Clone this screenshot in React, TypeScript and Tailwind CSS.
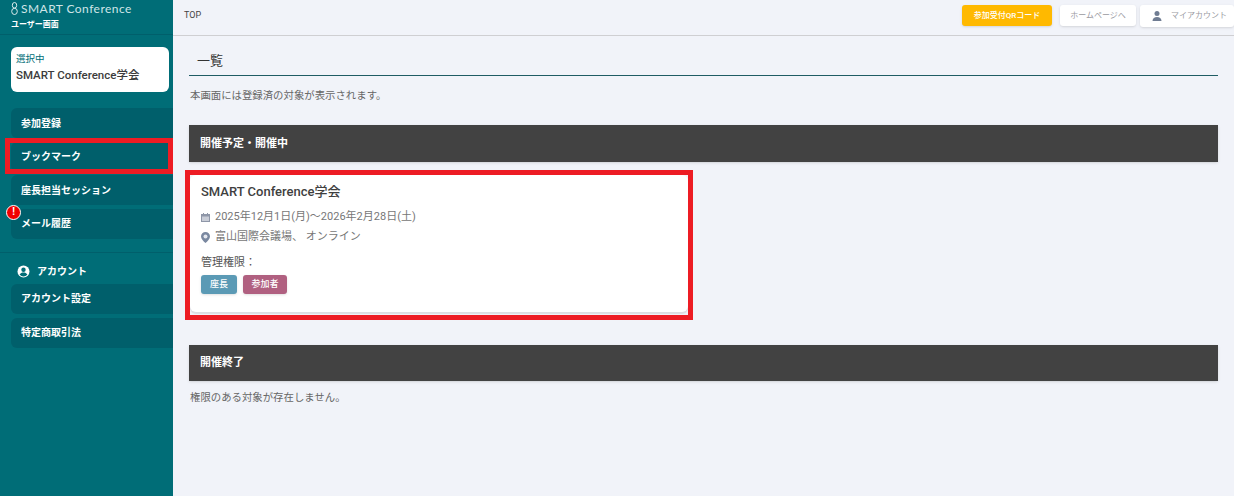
const font = { fontFamily: 'Roboto, "Noto Sans CJK JP", sans-serif' };

const NavItem = ({ label, highlight, alert }: { label: string; highlight?: boolean; alert?: boolean }) => (
  <div className="relative h-[30px] flex items-center pl-[10px] bg-[#005f6b] rounded-l-md text-[10px] font-bold text-white">
    {label}
    {highlight && <div className="absolute left-[-6px] right-0 top-[-4px] bottom-[-2px] border-[5px] border-[#ed1c24]" />}
    {alert && (
      <div className="absolute left-[-5px] top-[-4px] w-[15px] h-[15px] rounded-full bg-[#f00000] border border-white flex items-center justify-center text-[10px] font-bold text-white leading-none">
        !
      </div>
    )}
  </div>
);

const SectionBar = ({ label, tall }: { label: string; tall?: boolean }) => (
  <div className={`${tall ? 'h-[37px]' : 'h-[36px]'} bg-[#424242] flex items-center pl-[11px] pt-[1px] text-[11px] font-bold text-white shadow-sm`}>{label}</div>
);

const AccountIcon = () => (
  <svg width="13" height="13" viewBox="0 0 13 13">
    <circle cx="6.5" cy="6.5" r="6" fill="#fff" />
    <circle cx="6.5" cy="4.8" r="2.2" fill="#006d77" />
    <path d="M2.6 9.6c.8-1.5 2.3-2.1 3.9-2.1s3.1.6 3.9 2.1c-1 1.2-2.4 1.9-3.9 1.9s-2.9-.7-3.9-1.9z" fill="#006d77" />
  </svg>
);

const CalendarIcon = () => (
  <svg width="9" height="9" viewBox="0 0 9 9" className="shrink-0">
    <rect x="0" y="1" width="9" height="8" fill="#8f97a8" />
    <rect x="1" y="3.5" width="7" height="4.5" fill="#c9cdd7" />
    <rect x="2" y="0" width="1" height="2" fill="#8f97a8" />
    <rect x="6" y="0" width="1" height="2" fill="#8f97a8" />
  </svg>
);

const PinIcon = () => (
  <svg width="9" height="11" viewBox="0 0 9 11" className="shrink-0">
    <path d="M4.5 0a4.5 4.5 0 0 1 4.5 4.5c0 2.6-2.6 4.8-4.5 6.5C2.6 9.3 0 7.1 0 4.5A4.5 4.5 0 0 1 4.5 0z" fill="#7a88a0" />
    <circle cx="4.5" cy="4.5" r="2" fill="#e4e7ee" />
  </svg>
);

const PersonIcon = () => (
  <svg width="10" height="10" viewBox="0 0 10 10" className="shrink-0">
    <circle cx="5" cy="2.6" r="2.5" fill="#6f7c92" />
    <path d="M0.5 10c0-2.6 2-4 4.5-4s4.5 1.4 4.5 4z" fill="#6f7c92" />
  </svg>
);

export default function App() {
  return (
    <div className="flex w-[1234px] h-[496px] overflow-hidden bg-[#f1f3f9]" style={font}>
      <aside className="w-[173px] shrink-0 bg-[#006d77] flex flex-col">
        <div className="h-[35px] border-b border-[#005f6b] pl-[11px] text-white">
          <div className="flex items-center gap-[3px] h-[16px] pt-[1px]">
            <svg width="7" height="13" viewBox="0 0 7 13" fill="none" stroke="#dceced" strokeWidth="1">
              <ellipse cx="3.5" cy="3.3" rx="2.2" ry="2.8" />
              <ellipse cx="3.5" cy="9.4" rx="2.8" ry="3.1" />
            </svg>
            <span className="text-[12px] tracking-[0.45px] text-[#cfe5e7]" style={{ fontFamily: 'Lato, sans-serif' }}>SMART Conference</span>
          </div>
          <div className="text-[8px] font-bold leading-[14px] mt-[2px]">ユーザー画面</div>
        </div>

        <div className="mt-[12px] ml-[11px] mr-[4px] h-[45px] bg-white rounded-md pl-[5px] pt-[5px]">
          <div className="text-[9.5px] leading-[13px] text-[#006d77]">選択中</div>
          <div className="text-[11.5px] leading-[18px] mt-[1px] font-medium text-[#3c3c3c]">SMART Conference学会</div>
        </div>

        <nav className="mt-[16px] ml-[11px] flex flex-col gap-[3.5px]">
          <NavItem label="参加登録" />
          <NavItem label="ブックマーク" highlight />
          <NavItem label="座長担当セッション" />
          <NavItem label="メール履歴" alert />
        </nav>

        <div className="mt-[13px] border-t border-[#005f6b]" />

        <div className="mt-[10px] ml-[17px] h-[17px] flex items-center gap-[7px] text-[10px] font-bold text-white">
          <AccountIcon />
          アカウント
        </div>
        <div className="mt-[4px] ml-[11px] flex flex-col gap-[4px]">
          <NavItem label="アカウント設定" />
          <NavItem label="特定商取引法" />
        </div>
      </aside>

      <main className="flex-1 min-w-0">
        <header className="h-[36px] border-b border-[#cfcfd2] flex justify-between pl-[11px]">
          <span className="text-[9px] leading-[30px] text-[#444]">TOP</span>
          <div className="flex items-start pt-[5px] gap-[4px]">
            <div className="h-[21px] w-[90px] mr-[4px] rounded-[3px] bg-[#ffb900] flex items-center justify-center text-[8px] text-white font-medium shadow-sm">
              参加受付QRコード
            </div>
            <div className="h-[21px] w-[76px] rounded-[3px] bg-white flex items-center justify-center text-[8px] text-[#9a9a9f] shadow-sm">
              ホームページへ
            </div>
            <div className="h-[22px] w-[94px] rounded-[3px] bg-white flex items-center pl-[12px] gap-[9px] text-[8px] text-[#9a9a9f] shadow-sm">
              <PersonIcon />
              マイアカウント
            </div>
          </div>
        </header>

        <div className="px-[16px]">
          <h1 className="h-[40px] border-b border-[#1f5c64] pl-[8px] pt-[15px] text-[13px] leading-[20px] text-[#333]">一覧</h1>
          <p className="mt-[12px] ml-[1px] text-[10.4px] leading-[16px] text-[#666]">本画面には登録済の対象が表示されます。</p>

          <div className="mt-[21px]">
            <SectionBar label="開催予定・開催中" tall />
          </div>

          <div className="relative mt-[13px] ml-[1px] w-[498px] h-[137px] bg-white rounded-md shadow-[0_2px_1px_#dcdde2] pl-[11px] pt-[8px]">
            <div className="absolute -left-[5px] -right-[5px] -top-[5px] -bottom-[8px] border-[5px] border-[#ed1c24]" />
            <div className="text-[13px] leading-[18px] font-medium text-[#3f3f3f]">SMART Conference学会</div>
            <div className="mt-[7px] flex items-center gap-[5px] text-[11px] leading-[18px] text-[#777]">
              <CalendarIcon />
              2025年12月1日(月)～2026年2月28日(土)
            </div>
            <div className="mt-[1px] flex items-center gap-[5px] text-[11px] leading-[20px] text-[#777]">
              <PinIcon />
              富山国際会議場、 オンライン
            </div>
            <div className="mt-[8px] text-[11px] leading-[16px] text-[#555]">管理権限：</div>
            <div className="mt-[4px] flex gap-[6px]">
              <span className="w-[36px] h-[19px] rounded-[3px] bg-[#5b9ab5] flex items-center justify-center text-[9px] text-white font-medium shadow-sm">座長</span>
              <span className="w-[44px] h-[19px] rounded-[3px] bg-[#b06080] flex items-center justify-center text-[9px] text-white font-medium shadow-sm">参加者</span>
            </div>
          </div>

          <div className="mt-[33px]">
            <SectionBar label="開催終了" />
          </div>
          <p className="mt-[9px] ml-[1px] text-[10.4px] leading-[16px] text-[#666]">権限のある対象が存在しません。</p>
        </div>
      </main>
    </div>
  );
}
